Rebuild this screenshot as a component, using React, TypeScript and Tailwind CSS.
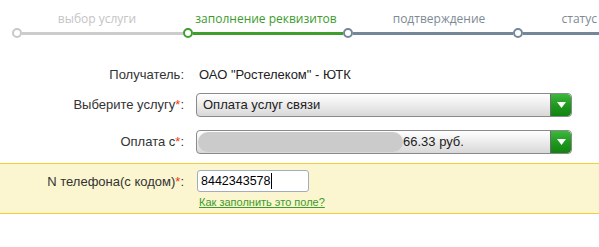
import React from "react";

const font = { fontFamily: '"Liberation Sans", Arial, sans-serif' };

function Arrow() {
  return (
    <div className="w-[21px] h-full rounded-r-[4px] bg-gradient-to-b from-[#3cb83c] via-[#1f9a1f] to-[#128212] border-l border-[#6a6a6a] flex items-center justify-center">
      <svg width="9" height="6" viewBox="0 0 9 6">
        <polygon points="0,0 9,0 4.5,6" fill="#ffffff" />
      </svg>
    </div>
  );
}

function Select({ children }: { children: React.ReactNode }) {
  return (
    <div className="w-[376px] h-[24px] rounded-[4px] border border-[#8a8a8a] bg-gradient-to-b from-[#ffffff] via-[#ececec] to-[#d8d8d8] flex items-stretch overflow-hidden">
      <div className="flex-1 flex items-center min-w-0">{children}</div>
      <Arrow />
    </div>
  );
}

function Dot({ color }: { color: string }) {
  return (
    <div
      className="w-[10px] h-[10px] rounded-full border-2 bg-white shrink-0"
      style={{ borderColor: color }}
    />
  );
}

export default function App() {
  return (
    <div className="w-[599px] h-[247px] bg-white overflow-hidden text-[13px] text-[#333]" style={font}>
      {/* progress */}
      <div className="pt-[10px]" style={{ fontFamily: '"Open Sans", "Liberation Sans", sans-serif' }}>
        <div className="flex text-[12px] leading-[17px] whitespace-nowrap">
          <div className="w-[180px] text-center text-[#c4c4c4] pl-[14px]">выбор услуги</div>
          <div className="w-[172px] text-center text-[#3b9b2b]">заполнение реквизитов</div>
          <div className="w-[174px] text-center text-[#7d8a94]">подтверждение</div>
          <div className="flex-1 text-right text-[#7d8a94] pr-[2px]">статус</div>
        </div>
        <div className="flex items-center mt-[1px] pl-[12px]">
          <Dot color="#c8c8c8" />
          <div className="w-[161px] h-[3px] bg-[#cccccc]" />
          <Dot color="#3e9e2e" />
          <div className="w-[150px] h-[3px] bg-[#3e9e2e]" />
          <Dot color="#74879a" />
          <div className="w-[160px] h-[3px] bg-[#74879a]" />
          <Dot color="#74879a" />
          <div className="flex-1 h-[3px] bg-[#74879a]" />
        </div>
      </div>

      {/* form */}
      <div className="mt-[27px] flex items-center h-[20px]">
        <div className="w-[184px] text-right">Получатель:</div>
        <div className="pl-[15px] text-[#222]">ОАО "Ростелеком" - ЮТК</div>
      </div>

      <div className="mt-[8px] flex items-center">
        <div className="w-[184px] text-right">
          Выберите услугу<span className="text-[#f03a10]">*</span>:
        </div>
        <div className="pl-[12px]">
          <Select>
            <span className="pl-[6px] text-[#222]">Оплата услуг связи</span>
          </Select>
        </div>
      </div>

      <div className="mt-[13px] flex items-center">
        <div className="w-[184px] text-right">
          Оплата с<span className="text-[#f03a10]">*</span>:
        </div>
        <div className="pl-[12px]">
          <Select>
            <div className="ml-[1px] w-[205px] h-[20px] rounded-full bg-[#cbcbcb] shrink-0" />
            <span className="text-[#222]">66.33 руб.</span>
          </Select>
        </div>
      </div>

      <div className="mt-[9px] h-[51px] bg-[#fbf6cf] border-y border-[#f3cd3a] flex">
        <div className="w-[184px] text-right pt-[8px]">
          N телефона(с кодом)<span className="text-[#f03a10]">*</span>:
        </div>
        <div className="pl-[13px] pt-[6px] flex flex-col">
          <div className="w-[112px] h-[22px] rounded-[3px] border border-[#a2acba] bg-white flex items-center pl-[3px] text-[12.5px] text-black">
            8442343578<span className="w-[1px] h-[16px] bg-black" />
          </div>
          <a className="mt-[4px] ml-[2px] text-[11px] leading-[13px] text-[#3b9b2b] underline">
            Как заполнить это поле?
          </a>
        </div>
      </div>
    </div>
  );
}
